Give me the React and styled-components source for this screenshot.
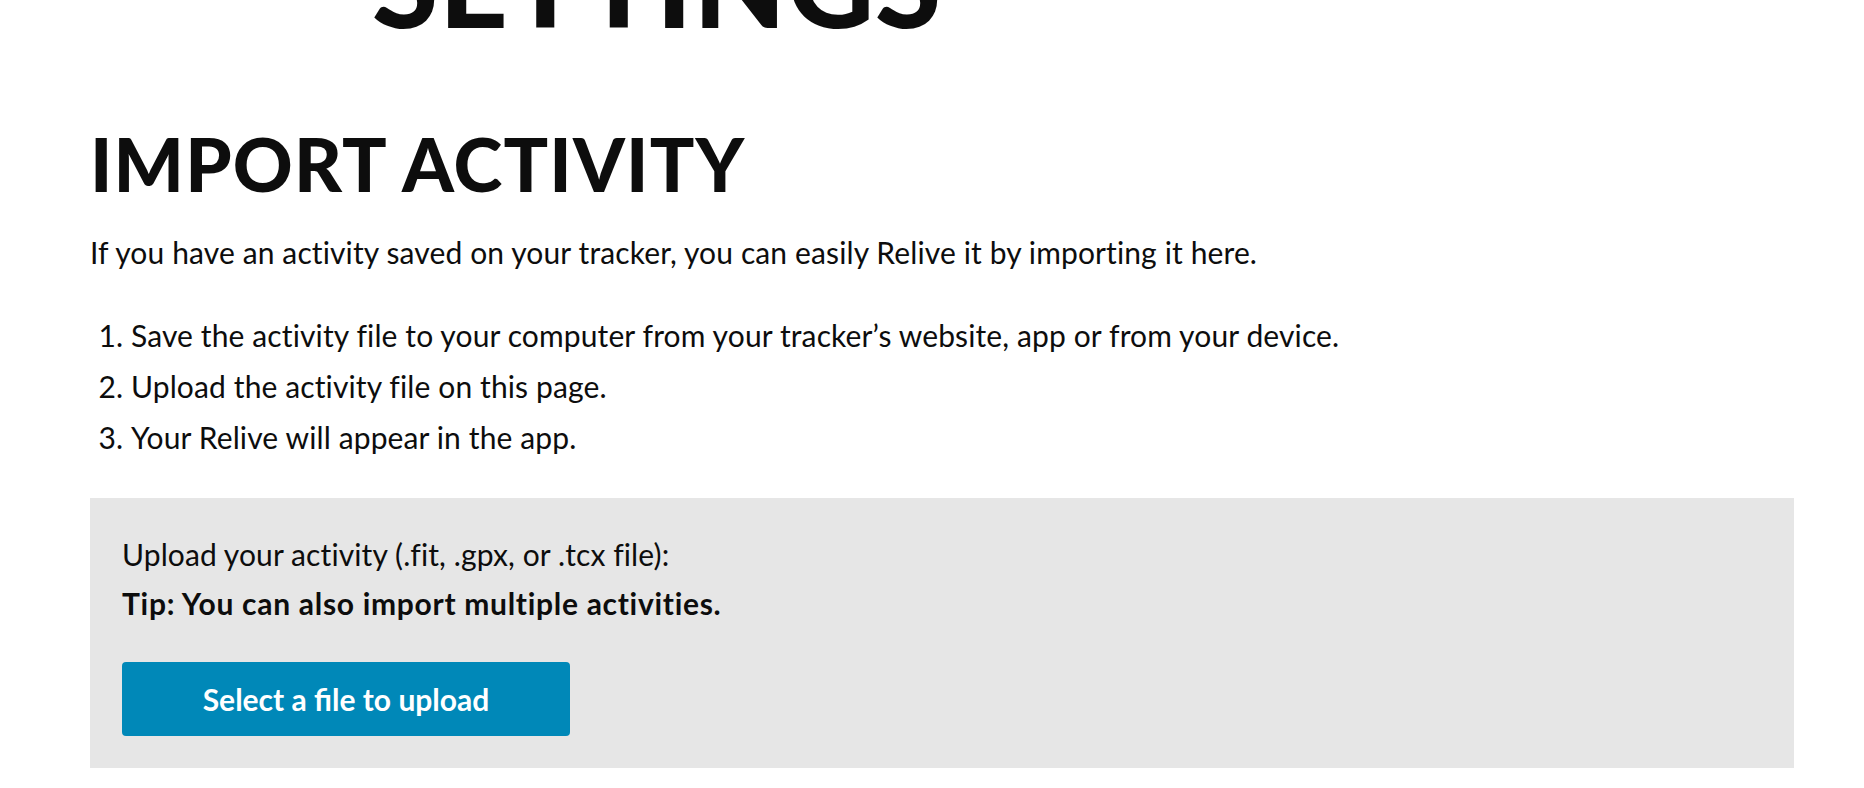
import React from "react";
import styled, { createGlobalStyle } from "styled-components";

const GlobalStyle = createGlobalStyle`
  html, body {
    margin: 0;
    padding: 0;
    background: #fff;
    overflow: hidden;
  }
  body {
    font-family: "Lato", "Liberation Sans", sans-serif;
    color: #0d0d0d;
  }
`;

const steps = [
  "Save the activity file to your computer from your tracker\u2019s website, app or from your device.",
  "Upload the activity file on this page.",
  "Your Relive will appear in the app.",
];

const App = () => {
  return (
    <>
      <GlobalStyle />
      <Page>
        <PageTitle>SETTINGS</PageTitle>
        <Section>
          <Heading>IMPORT ACTIVITY</Heading>
          <Intro>
            If you have an activity saved on your tracker, you can easily Relive
            it by importing it here.
          </Intro>
          <Steps>
            {steps.map((s) => (
              <Step key={s}>{s}</Step>
            ))}
          </Steps>
          <UploadBox>
            <BoxLine>Upload your activity (.fit, .gpx, or .tcx file):</BoxLine>
            <BoxLine bold>Tip: You can also import multiple activities.</BoxLine>
            <UploadButton type="button">Select a file to upload</UploadButton>
          </UploadBox>
        </Section>
      </Page>
    </>
  );
};

const Page = styled.main`
  padding: 0 70px 0 90px;
  display: flex;
  flex-direction: column;
`;

const PageTitle = styled.h1`
  margin: -78px 0 0 282px;
  font-family: "Lato", sans-serif;
  font-weight: 900;
  font-size: 120px;
  line-height: 1;
  letter-spacing: 1px;
  color: #0d0d0d;
`;

const Section = styled.section`
  display: flex;
  flex-direction: column;
  margin-top: 85px;
`;

const Heading = styled.h2`
  margin: 0;
  font-family: "Lato", sans-serif;
  font-weight: 900;
  font-size: 74px;
  line-height: 74px;
  letter-spacing: 1.2px;
  color: #0d0d0d;
`;

const Intro = styled.p`
  margin: 31px 0 0;
  font-size: 30px;
  line-height: 40px;
  letter-spacing: 0.12px;
`;

const Steps = styled.ol`
  margin: 38px 0 0;
  padding-left: 41px;
`;

const Step = styled.li`
  font-size: 30px;
  line-height: 51px;
  letter-spacing: 0.12px;
`;

const UploadBox = styled.div`
  margin-top: 35px;
  background: #e6e6e6;
  padding: 32px;
  display: flex;
  flex-direction: column;
  align-items: flex-start;
`;

const BoxLine = styled.p`
  margin: 0;
  font-size: 30px;
  line-height: 49px;
  font-weight: ${({ bold }) => (bold ? 700 : 400)};
  letter-spacing: ${({ bold }) => (bold ? "0.7px" : "0.1px")};
`;

const UploadButton = styled.button`
  margin-top: 34px;
  width: 448px;
  height: 74px;
  border: none;
  border-radius: 4px;
  background: #0088b8;
  color: #fff;
  font-family: "Lato", sans-serif;
  font-weight: 700;
  font-size: 30px;
  cursor: pointer;
`;

export default App;
